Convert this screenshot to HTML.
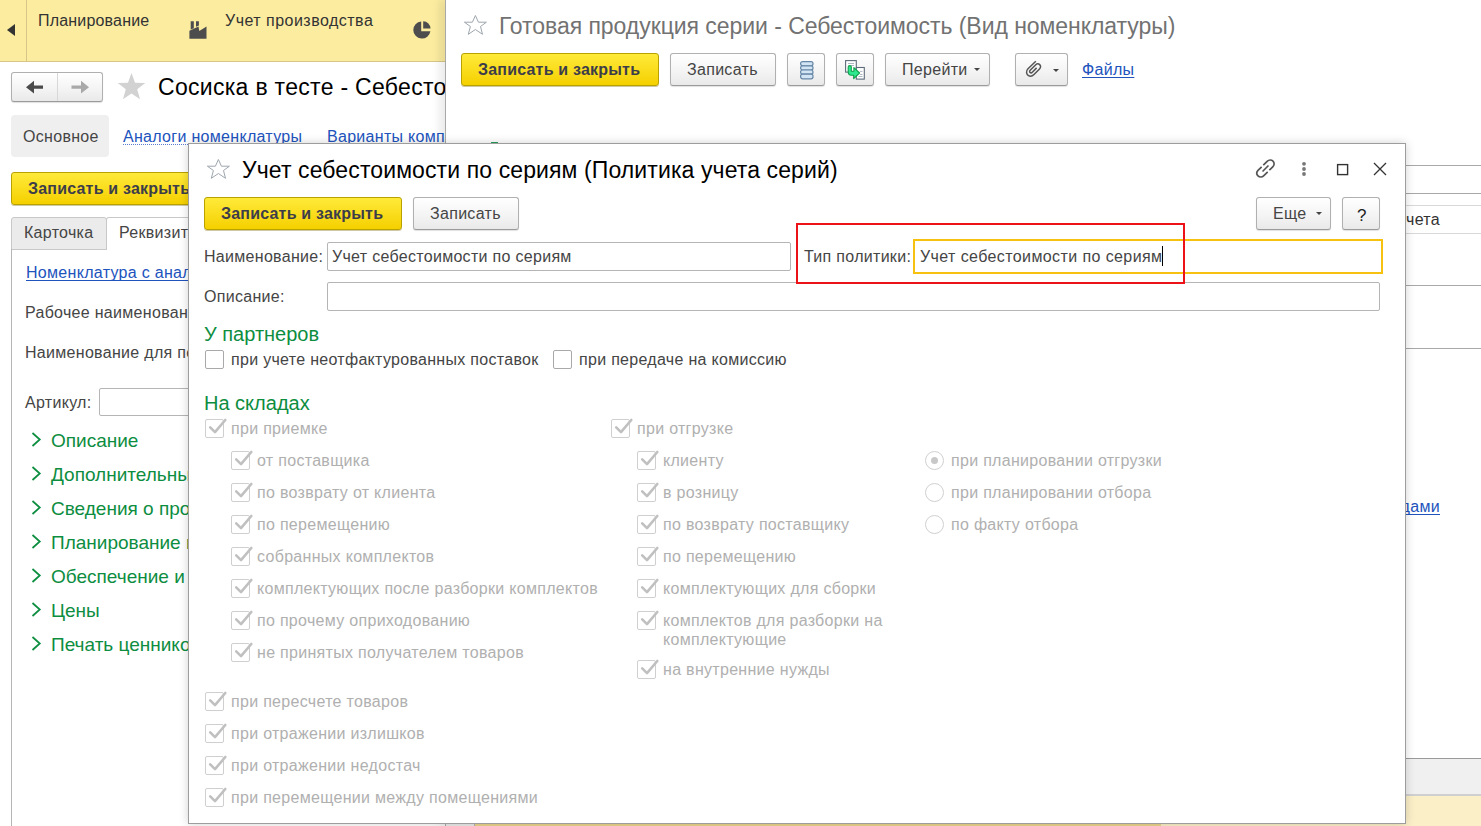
<!DOCTYPE html>
<html><head><meta charset="utf-8">
<style>
*{box-sizing:border-box;margin:0;padding:0}
html,body{width:1481px;height:826px;overflow:hidden;background:#fff}
body{position:relative;font-family:"Liberation Sans",sans-serif;font-size:16px;color:#454545}
.a{position:absolute}
.t{position:absolute;white-space:nowrap;line-height:1;letter-spacing:.3px}
.btn{position:absolute;border:1px solid #b0b0b0;border-bottom-color:#9a9a9a;border-radius:3px;background:linear-gradient(#fff,#f3f3f3 60%,#e9e9e9);box-shadow:0 1px 1px rgba(0,0,0,.12)}
.ybtn{position:absolute;border:1px solid #b9a100;border-radius:3px;background:linear-gradient(#ffea3a,#f5d000);box-shadow:0 1px 0 rgba(120,100,0,.35)}
.lnk{color:#2153bd;text-underline-offset:2px;text-decoration-skip-ink:none}
.grn{color:#0d8d3f}
.dis{color:#b0b0b0}
.cb{position:absolute;width:19px;height:19px;border:1px solid #a9a9a9;border-radius:2px;background:#fff}
.cbd{position:absolute;width:19px;height:19px;border:1px solid #cfcfcf;border-radius:2px;background:#fff}
.cbd svg{position:absolute;left:1px;top:-2px}
.rad{position:absolute;width:19px;height:19px;border:1px solid #d0d0d0;border-radius:50%;background:#fff}
.rad i{position:absolute;left:5px;top:5px;width:7px;height:7px;border-radius:50%;background:#c8c8c8}
.inp{position:absolute;border:1px solid #b5b5b5;border-radius:2px;background:#fff}
</style></head><body>

<!-- ============ WINDOW 1 (left) ============ -->
<div class="a" style="left:0;top:0;width:445px;height:62px;background:#fbeca0;border-bottom:1px solid #d6c688"></div>
<div class="a" style="left:26px;top:0;width:1px;height:61px;background:#d6c688"></div>
<svg class="a" style="left:7px;top:24px" width="9" height="12"><path d="M8 0 L0 6 L8 12Z" fill="#333"/></svg>
<div class="t" style="left:38px;top:13px;color:#333;letter-spacing:.18px">Планирование</div>
<div class="t" style="left:225px;top:13px;color:#333;letter-spacing:.48px">Учет производства</div>

<!-- back/fwd --><div class="btn" style="left:11px;top:72px;width:92px;height:30px"></div>
<div class="a" style="left:57px;top:73px;width:1px;height:28px;background:#d8d8d8"></div>
<svg class="a" style="left:184px;top:14px" width="30" height="30"><path d="M5.4 16.7 L14.5 12.5 L15.3 17.1 L22.5 12.4 L22.5 24.7 L5.4 24.7Z M6.7 7.3 H9.8 V14.2 L6.7 15.6Z M12 7.3 H14.9 V11.4 L12 12.8Z" fill="#4d4d4d"/></svg>
<svg class="a" style="left:407px;top:14px" width="30" height="30"><path d="M14.2 7.4 A8.6 8.6 0 1 0 23.4 17.2 L14.2 17.2Z" fill="#4d4d4d"/><path d="M16.2 7.3 A7.3 7.3 0 0 1 23.5 14.6 L16.2 14.6Z" fill="#4d4d4d"/></svg>
<svg class="a" style="left:24px;top:80px" width="22" height="16"><path d="M2 7.2 L10 0.8 L10 5.6 L19 5.6 L19 8.8 L10 8.8 L10 13.6Z" fill="#4a4a4a"/></svg>
<svg class="a" style="left:69px;top:80px" width="22" height="16"><path d="M20 7.2 L12 0.8 L12 5.6 L2.5 5.6 L2.5 8.8 L12 8.8 L12 13.6Z" fill="#a9a9a9"/></svg>
<svg class="a" style="left:117px;top:73px" width="30" height="28"><path d="M14.50,0.00 L18.03,9.65 L28.29,10.02 L20.21,16.35 L23.02,26.23 L14.50,20.50 L5.98,26.23 L8.79,16.35 L0.71,10.02 L10.97,9.65Z" fill="#d2d2d2"/></svg>
<svg class="a" style="left:31px;top:432px" width="11" height="16"><path d="M1.5 1 L8.8 7.5 L1.5 14" fill="none" stroke="#0d8d3f" stroke-width="1.7"/></svg>
<svg class="a" style="left:31px;top:466px" width="11" height="16"><path d="M1.5 1 L8.8 7.5 L1.5 14" fill="none" stroke="#0d8d3f" stroke-width="1.7"/></svg>
<svg class="a" style="left:31px;top:500px" width="11" height="16"><path d="M1.5 1 L8.8 7.5 L1.5 14" fill="none" stroke="#0d8d3f" stroke-width="1.7"/></svg>
<svg class="a" style="left:31px;top:534px" width="11" height="16"><path d="M1.5 1 L8.8 7.5 L1.5 14" fill="none" stroke="#0d8d3f" stroke-width="1.7"/></svg>
<svg class="a" style="left:31px;top:568px" width="11" height="16"><path d="M1.5 1 L8.8 7.5 L1.5 14" fill="none" stroke="#0d8d3f" stroke-width="1.7"/></svg>
<svg class="a" style="left:31px;top:602px" width="11" height="16"><path d="M1.5 1 L8.8 7.5 L1.5 14" fill="none" stroke="#0d8d3f" stroke-width="1.7"/></svg>
<svg class="a" style="left:31px;top:636px" width="11" height="16"><path d="M1.5 1 L8.8 7.5 L1.5 14" fill="none" stroke="#0d8d3f" stroke-width="1.7"/></svg>


<div class="t" style="left:158px;top:76px;font-size:23px;color:#000;letter-spacing:.3px">Сосиска в тесте - Себестоимость</div>
<div class="a" style="left:11px;top:115px;width:98px;height:42px;background:#efefef;border-radius:4px"></div>
<div class="t" style="left:23px;top:129px">Основное</div>
<div class="t lnk" style="left:123px;top:129px">Аналоги номенклатуры</div><div class="a" style="left:123px;top:144px;width:179px;height:1px;background:repeating-linear-gradient(90deg,#5b7fd0 0 1px,transparent 1px 2px)"></div>
<div class="t lnk" style="left:327px;top:129px">Варианты комплектации</div>

<div class="ybtn" style="left:11px;top:172px;width:200px;height:33px"></div>
<div class="t" style="left:28px;top:181px;font-weight:bold;letter-spacing:.2px;color:#3d3d4a">Записать и закрыть</div>

<div class="a" style="left:11px;top:217px;width:96px;height:33px;background:#ebebeb;border:1px solid #c8c8c8;border-radius:3px 3px 0 0"></div>
<div class="a" style="left:106px;top:217px;width:200px;height:33px;background:#fff;border:1px solid #c8c8c8;border-bottom:none;border-radius:3px 3px 0 0"></div>
<div class="a" style="left:11px;top:249px;width:1px;height:577px;background:#b5b5b5"></div>
<div class="t" style="left:24px;top:225px">Карточка</div>
<div class="t" style="left:119px;top:225px">Реквизиты</div>
<div class="t lnk" style="left:26px;top:265px;text-decoration:underline">Номенклатура с аналогами</div>
<div class="t" style="left:25px;top:305px">Рабочее наименование</div>
<div class="t" style="left:25px;top:345px">Наименование для печати</div>
<div class="t" style="left:25px;top:395px">Артикул:</div>
<div class="inp" style="left:99px;top:388px;width:200px;height:28px"></div>

<div class="t grn" style="left:51px;top:431px;font-size:19px;letter-spacing:0">Описание</div>
<div class="t grn" style="left:51px;top:465px;font-size:19px;letter-spacing:0">Дополнительные реквизиты</div>
<div class="t grn" style="left:51px;top:499px;font-size:19px;letter-spacing:0">Сведения о производстве</div>
<div class="t grn" style="left:51px;top:533px;font-size:19px;letter-spacing:0">Планирование и закупки</div>
<div class="t grn" style="left:51px;top:567px;font-size:19px;letter-spacing:0">Обеспечение и хранение</div>
<div class="t grn" style="left:51px;top:601px;font-size:19px;letter-spacing:0">Цены</div>
<div class="t grn" style="left:51px;top:635px;font-size:19px;letter-spacing:0">Печать ценников</div>

<!-- ============ WINDOW 2 ============ -->
<div class="a" style="left:445px;top:0;width:1036px;height:826px;background:#fff;border-left:1px solid #a8a8a8;box-shadow:-6px 0 8px rgba(0,0,0,.08)"></div>
<div class="t" style="left:499px;top:15px;font-size:23px;color:#727272;letter-spacing:-.05px">Готовая продукция серии - Себестоимость (Вид номенклатуры)</div>

<div class="ybtn" style="left:461px;top:53px;width:198px;height:33px"></div>
<div class="t" style="left:478px;top:62px;font-weight:bold;letter-spacing:.2px;color:#3d3d4a">Записать и закрыть</div>
<div class="btn" style="left:670px;top:53px;width:106px;height:33px"></div>
<div class="t" style="left:687px;top:62px">Записать</div>
<div class="btn" style="left:787px;top:53px;width:38px;height:33px"></div>
<div class="btn" style="left:836px;top:53px;width:38px;height:33px"></div>
<div class="btn" style="left:885px;top:53px;width:105px;height:33px"></div>
<div class="t" style="left:902px;top:62px">Перейти</div>
<div class="btn" style="left:1015px;top:53px;width:53px;height:33px"></div>
<div class="t lnk" style="left:1082px;top:62px;text-decoration:underline">Файлы</div><svg class="a" style="left:463px;top:14px" width="25" height="22"><path d="M12.4,1.5 L15.4,8.2 L23.4,8.2 L17.5,12.5 L19.5,20.3 L12.4,15.5 L5.3,20.3 L7.4,12.5 L1.4,8.2 L9.4,8.2Z" fill="none" stroke="#9ea6ae" stroke-width="1" stroke-linejoin="round"/></svg>
<svg class="a" style="left:800px;top:61px" width="14" height="19"><g fill="#d3e5f5" stroke="#6586a6" stroke-width="1.2"><rect x="0.6" y="0.6" width="12.4" height="4.2" rx="2"/><rect x="0.6" y="4.8" width="12.4" height="4.2" rx="2"/><rect x="0.6" y="9" width="12.4" height="4.2" rx="2"/><rect x="0.6" y="13.2" width="12.4" height="4.6" rx="2"/></g></svg>
<svg class="a" style="left:840px;top:56px" width="30" height="28"><rect x="5.6" y="4.6" width="10.7" height="11.5" fill="#fff" stroke="#5d6b7a" stroke-width="1.1"/><path d="M8 7.5 H14 M11 9.5 H14" stroke="#9aa6b2" stroke-width="0.8"/><rect x="16.3" y="11.5" width="8" height="11.6" fill="#fff" stroke="#5d6b7a" stroke-width="1.1"/><path d="M20 15.4 H22.5 M20 18.5 H22.5 M18.5 20.5 H22.5" stroke="#9aa6b2" stroke-width="0.8"/><path d="M8.2 11 C8.2 9.2,11.3 9.2,11.3 11 L11.3 15.2 L13.9 15.2 L13.9 11.6 L19.6 17 L13.7 22.6 L13.7 19.2 L11.3 19.2 C9.3 19.2,8.2 17.8,8.2 15.8Z" fill="#2ee890" stroke="#10a04a" stroke-width="1.1" stroke-linejoin="round"/></svg>
<svg class="a" style="left:974px;top:68px" width="7" height="4"><path d="M0 0 H6 L3 3Z" fill="#444"/></svg>
<svg class="a" style="left:1024px;top:59px" width="20" height="20"><path d="M11.8 2.2 L4 9.8 C1.5 12.3,2.5 15.5,4.5 16.6 C6.5 17.8,8.5 17,10 15.5 L15.5 10 C17 8.5,16.8 6.6,15.7 5.6 C14.6 4.6,12.8 4.7,11.5 6 L6.2 11.2 C5.4 12,5.5 13,6.1 13.5 C6.7 14,7.6 13.9,8.3 13.2 L12.6 8.9" fill="none" stroke="#555" stroke-width="1.5"/></svg>
<svg class="a" style="left:1053px;top:69px" width="7" height="4"><path d="M0 0 H6 L3 3Z" fill="#444"/></svg>


<div class="a" style="left:1405px;top:165px;width:76px;height:1px;background:#a8a8a8"></div>
<div class="a" style="left:1405px;top:193px;width:76px;height:1px;background:#a8a8a8"></div>
<div class="a" style="left:1405px;top:205px;width:76px;height:1px;background:#d8d8d8"></div>
<div class="a" style="left:1405px;top:233px;width:76px;height:1px;background:#d8d8d8"></div>
<div class="a" style="left:1405px;top:285px;width:76px;height:1px;background:#a8a8a8"></div>
<div class="a" style="left:1405px;top:348px;width:76px;height:1px;background:#a8a8a8"></div>
<div class="t" style="left:1406px;top:212px;color:#333">чета</div>
<div class="t lnk" style="left:1366px;top:499px;text-decoration:underline">складами</div>
<div class="a" style="left:446px;top:758px;width:1035px;height:1px;background:#9a9a9a"></div>
<div class="a" style="left:446px;top:759px;width:1035px;height:35px;background:#f0f0f0"></div>
<div class="a" style="left:446px;top:794px;width:1035px;height:2px;background:#d0d0d0"></div>
<div class="a" style="left:446px;top:796px;width:1035px;height:30px;background:#faefc7"></div>

<div class="a" style="left:446px;top:810px;width:29px;height:16px;background:#ebebeb;border-right:1px solid #b0b0b0"></div>
<div class="a" style="left:475px;top:810px;width:686px;height:16px;background:#ebd48c"></div>
<div class="a" style="left:491px;top:142px;width:7px;height:1px;background:#2a9f5c"></div>
<!-- ============ MODAL ============ -->
<div class="a" style="left:188px;top:143px;width:1218px;height:681px;background:#fff;border:1px solid #9d9d9d;box-shadow:0 0 9px rgba(0,0,0,.18)"></div>
<div class="t" style="left:242px;top:159px;font-size:23px;color:#000;letter-spacing:.11px">Учет себестоимости по сериям (Политика учета серий)</div>

<div class="ybtn" style="left:204px;top:197px;width:198px;height:33px"></div>
<div class="t" style="left:221px;top:206px;font-weight:bold;letter-spacing:.2px;color:#3d3d4a">Записать и закрыть</div>
<div class="btn" style="left:413px;top:197px;width:106px;height:33px"></div>
<div class="t" style="left:430px;top:206px">Записать</div>
<div class="btn" style="left:1256px;top:197px;width:75px;height:33px"></div>
<div class="t" style="left:1273px;top:206px">Еще</div>
<div class="btn" style="left:1342px;top:197px;width:38px;height:33px"></div>
<div class="t" style="left:1357px;top:207px;font-size:17px;color:#222">?</div><svg class="a" style="left:206px;top:158px" width="25" height="22"><path d="M12.4,1.5 L15.4,8.2 L23.4,8.2 L17.5,12.5 L19.5,20.3 L12.4,15.5 L5.3,20.3 L7.4,12.5 L1.4,8.2 L9.4,8.2Z" fill="none" stroke="#9ea6ae" stroke-width="1" stroke-linejoin="round"/></svg>
<svg class="a" style="left:1254px;top:157px" width="23" height="23"><path transform="translate(11.5 11.5) scale(1.1) translate(-10.5 -10.5)" d="M8.5 7.5 L12 4 C13.6 2.4,15.9 2.4,17.3 3.8 C18.7 5.2,18.7 7.4,17.1 9 L14 12 M12.5 13.5 L9 17 C7.4 18.6,5.1 18.6,3.7 17.2 C2.3 15.8,2.3 13.6,3.9 12 L7 9 M7.8 13.2 L13.2 7.8" fill="none" stroke="#555" stroke-width="1.5"/></svg>
<svg class="a" style="left:1300px;top:160px" width="8" height="18"><circle cx="4" cy="3.8" r="1.9" fill="#777"/><circle cx="4" cy="9" r="1.9" fill="#777"/><circle cx="4" cy="14" r="1.9" fill="#777"/></svg>
<svg class="a" style="left:1336px;top:163px" width="13" height="13"><rect x="1.6" y="1.6" width="10" height="10" fill="none" stroke="#333" stroke-width="1.4"/></svg>
<svg class="a" style="left:1373px;top:162px" width="14" height="14"><path d="M1 1 L13 13 M13 1 L1 13" stroke="#333" stroke-width="1.3"/></svg>
<svg class="a" style="left:1316px;top:212px" width="7" height="4"><path d="M0 0 H6 L3 3Z" fill="#444"/></svg>


<div class="t" style="left:204px;top:249px">Наименование:</div>
<div class="inp" style="left:327px;top:242px;width:464px;height:29px"></div>
<div class="t" style="left:332px;top:249px">Учет себестоимости по сериям</div>
<div class="t" style="left:804px;top:249px">Тип политики:</div>
<div class="a" style="left:913px;top:239px;width:470px;height:35px;border:2px solid #f7c20f"></div>
<div class="t" style="left:920px;top:249px;letter-spacing:.4px">Учет себестоимости по сериям</div>
<div class="a" style="left:1162px;top:246px;width:1px;height:20px;background:#000"></div>
<div class="t" style="left:204px;top:289px">Описание:</div>
<div class="inp" style="left:327px;top:282px;width:1053px;height:29px"></div>
<div class="a" style="left:796px;top:223px;width:389px;height:61px;border:2px solid #ec1217"></div>

<div class="t grn" style="left:204px;top:324px;font-size:20px;letter-spacing:0">У партнеров</div>
<div class="cb" style="left:205px;top:350px"></div>
<div class="t" style="left:231px;top:352px">при учете неотфактурованных поставок</div>
<div class="cb" style="left:553px;top:350px"></div>
<div class="t" style="left:579px;top:352px">при передаче на комиссию</div>
<div class="t grn" style="left:204px;top:393px;font-size:20px;letter-spacing:0">На складах</div>

<div class="cbd" style="left:205px;top:419px"><svg width="22" height="20" viewBox="0 0 22 20"><path d="M3.2 9.4 L8 14.2 L18.3 2" fill="none" stroke="#c0c0c0" stroke-width="2.6" stroke-linecap="round" stroke-linejoin="round"/></svg></div>
<div class="t dis" style="left:231px;top:421px">при приемке</div>
<div class="cbd" style="left:231px;top:451px"><svg width="22" height="20" viewBox="0 0 22 20"><path d="M3.2 9.4 L8 14.2 L18.3 2" fill="none" stroke="#c0c0c0" stroke-width="2.6" stroke-linecap="round" stroke-linejoin="round"/></svg></div>
<div class="t dis" style="left:257px;top:453px">от поставщика</div>
<div class="cbd" style="left:231px;top:483px"><svg width="22" height="20" viewBox="0 0 22 20"><path d="M3.2 9.4 L8 14.2 L18.3 2" fill="none" stroke="#c0c0c0" stroke-width="2.6" stroke-linecap="round" stroke-linejoin="round"/></svg></div>
<div class="t dis" style="left:257px;top:485px">по возврату от клиента</div>
<div class="cbd" style="left:231px;top:515px"><svg width="22" height="20" viewBox="0 0 22 20"><path d="M3.2 9.4 L8 14.2 L18.3 2" fill="none" stroke="#c0c0c0" stroke-width="2.6" stroke-linecap="round" stroke-linejoin="round"/></svg></div>
<div class="t dis" style="left:257px;top:517px">по перемещению</div>
<div class="cbd" style="left:231px;top:547px"><svg width="22" height="20" viewBox="0 0 22 20"><path d="M3.2 9.4 L8 14.2 L18.3 2" fill="none" stroke="#c0c0c0" stroke-width="2.6" stroke-linecap="round" stroke-linejoin="round"/></svg></div>
<div class="t dis" style="left:257px;top:549px">собранных комплектов</div>
<div class="cbd" style="left:231px;top:579px"><svg width="22" height="20" viewBox="0 0 22 20"><path d="M3.2 9.4 L8 14.2 L18.3 2" fill="none" stroke="#c0c0c0" stroke-width="2.6" stroke-linecap="round" stroke-linejoin="round"/></svg></div>
<div class="t dis" style="left:257px;top:581px">комплектующих после разборки комплектов</div>
<div class="cbd" style="left:231px;top:611px"><svg width="22" height="20" viewBox="0 0 22 20"><path d="M3.2 9.4 L8 14.2 L18.3 2" fill="none" stroke="#c0c0c0" stroke-width="2.6" stroke-linecap="round" stroke-linejoin="round"/></svg></div>
<div class="t dis" style="left:257px;top:613px">по прочему оприходованию</div>
<div class="cbd" style="left:231px;top:643px"><svg width="22" height="20" viewBox="0 0 22 20"><path d="M3.2 9.4 L8 14.2 L18.3 2" fill="none" stroke="#c0c0c0" stroke-width="2.6" stroke-linecap="round" stroke-linejoin="round"/></svg></div>
<div class="t dis" style="left:257px;top:645px">не принятых получателем товаров</div>
<div class="cbd" style="left:205px;top:692px"><svg width="22" height="20" viewBox="0 0 22 20"><path d="M3.2 9.4 L8 14.2 L18.3 2" fill="none" stroke="#c0c0c0" stroke-width="2.6" stroke-linecap="round" stroke-linejoin="round"/></svg></div>
<div class="t dis" style="left:231px;top:694px">при пересчете товаров</div>
<div class="cbd" style="left:205px;top:724px"><svg width="22" height="20" viewBox="0 0 22 20"><path d="M3.2 9.4 L8 14.2 L18.3 2" fill="none" stroke="#c0c0c0" stroke-width="2.6" stroke-linecap="round" stroke-linejoin="round"/></svg></div>
<div class="t dis" style="left:231px;top:726px">при отражении излишков</div>
<div class="cbd" style="left:205px;top:756px"><svg width="22" height="20" viewBox="0 0 22 20"><path d="M3.2 9.4 L8 14.2 L18.3 2" fill="none" stroke="#c0c0c0" stroke-width="2.6" stroke-linecap="round" stroke-linejoin="round"/></svg></div>
<div class="t dis" style="left:231px;top:758px">при отражении недостач</div>
<div class="cbd" style="left:205px;top:788px"><svg width="22" height="20" viewBox="0 0 22 20"><path d="M3.2 9.4 L8 14.2 L18.3 2" fill="none" stroke="#c0c0c0" stroke-width="2.6" stroke-linecap="round" stroke-linejoin="round"/></svg></div>
<div class="t dis" style="left:231px;top:790px">при перемещении между помещениями</div>
<div class="cbd" style="left:611px;top:419px"><svg width="22" height="20" viewBox="0 0 22 20"><path d="M3.2 9.4 L8 14.2 L18.3 2" fill="none" stroke="#c0c0c0" stroke-width="2.6" stroke-linecap="round" stroke-linejoin="round"/></svg></div>
<div class="t dis" style="left:637px;top:421px">при отгрузке</div>
<div class="cbd" style="left:637px;top:451px"><svg width="22" height="20" viewBox="0 0 22 20"><path d="M3.2 9.4 L8 14.2 L18.3 2" fill="none" stroke="#c0c0c0" stroke-width="2.6" stroke-linecap="round" stroke-linejoin="round"/></svg></div>
<div class="t dis" style="left:663px;top:453px">клиенту</div>
<div class="cbd" style="left:637px;top:483px"><svg width="22" height="20" viewBox="0 0 22 20"><path d="M3.2 9.4 L8 14.2 L18.3 2" fill="none" stroke="#c0c0c0" stroke-width="2.6" stroke-linecap="round" stroke-linejoin="round"/></svg></div>
<div class="t dis" style="left:663px;top:485px">в розницу</div>
<div class="cbd" style="left:637px;top:515px"><svg width="22" height="20" viewBox="0 0 22 20"><path d="M3.2 9.4 L8 14.2 L18.3 2" fill="none" stroke="#c0c0c0" stroke-width="2.6" stroke-linecap="round" stroke-linejoin="round"/></svg></div>
<div class="t dis" style="left:663px;top:517px">по возврату поставщику</div>
<div class="cbd" style="left:637px;top:547px"><svg width="22" height="20" viewBox="0 0 22 20"><path d="M3.2 9.4 L8 14.2 L18.3 2" fill="none" stroke="#c0c0c0" stroke-width="2.6" stroke-linecap="round" stroke-linejoin="round"/></svg></div>
<div class="t dis" style="left:663px;top:549px">по перемещению</div>
<div class="cbd" style="left:637px;top:579px"><svg width="22" height="20" viewBox="0 0 22 20"><path d="M3.2 9.4 L8 14.2 L18.3 2" fill="none" stroke="#c0c0c0" stroke-width="2.6" stroke-linecap="round" stroke-linejoin="round"/></svg></div>
<div class="t dis" style="left:663px;top:581px">комплектующих для сборки</div>
<div class="cbd" style="left:637px;top:611px"><svg width="22" height="20" viewBox="0 0 22 20"><path d="M3.2 9.4 L8 14.2 L18.3 2" fill="none" stroke="#c0c0c0" stroke-width="2.6" stroke-linecap="round" stroke-linejoin="round"/></svg></div>
<div class="t dis" style="left:663px;top:613px">комплектов для разборки на</div>
<div class="t dis" style="left:663px;top:632px">комплектующие</div>
<div class="cbd" style="left:637px;top:660px"><svg width="22" height="20" viewBox="0 0 22 20"><path d="M3.2 9.4 L8 14.2 L18.3 2" fill="none" stroke="#c0c0c0" stroke-width="2.6" stroke-linecap="round" stroke-linejoin="round"/></svg></div>
<div class="t dis" style="left:663px;top:662px">на внутренние нужды</div>
<div class="rad" style="left:925px;top:451px"><i></i></div>
<div class="t dis" style="left:951px;top:453px">при планировании отгрузки</div>
<div class="rad" style="left:925px;top:483px"></div>
<div class="t dis" style="left:951px;top:485px">при планировании отбора</div>
<div class="rad" style="left:925px;top:515px"></div>
<div class="t dis" style="left:951px;top:517px">по факту отбора</div>

</body></html>
